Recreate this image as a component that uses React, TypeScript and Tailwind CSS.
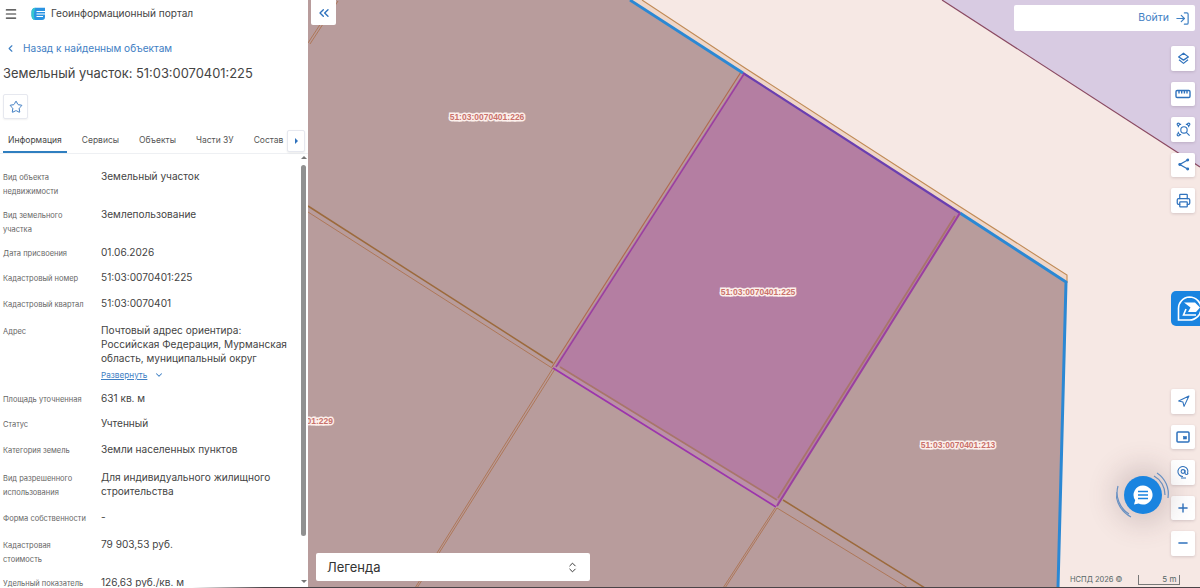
import { ChevronDown, ChevronLeft, ChevronsLeft, ChevronsUpDown, LogIn, Menu, Minus, Navigation, Plus, Printer, Star } from 'lucide-react'
import type { ReactNode } from 'react'

type Row = { label: string[]; value?: string[]; h: string; more?: boolean }

const rows: Row[] = [
  { label: ['Вид объекта', 'недвижимости'], value: ['Земельный участок'], h: 'h-[38px]' },
  { label: ['Вид земельного', 'участка'], value: ['Землепользование'], h: 'h-[38px]' },
  { label: ['Дата присвоения'], value: ['01.06.2026'], h: 'h-[25px]' },
  { label: ['Кадастровый номер'], value: ['51:03:0070401:225'], h: 'h-[26px]' },
  { label: ['Кадастровый квартал'], value: ['51:03:0070401'], h: 'h-[27px]' },
  { label: ['Адрес'], value: ['Почтовый адрес ориентира:', 'Российская Федерация, Мурманская', 'область, муниципальный округ'], h: 'h-[68px]', more: true },
  { label: ['Площадь уточненная'], value: ['631 кв. м'], h: 'h-[25px]' },
  { label: ['Статус'], value: ['Учтенный'], h: 'h-[26px]' },
  { label: ['Категория земель'], value: ['Земли населенных пунктов'], h: 'h-[28px]' },
  { label: ['Вид разрешенного', 'использования'], value: ['Для индивидуального жилищного', 'строительства'], h: 'h-[40px]' },
  { label: ['Форма собственности'], value: ['-'], h: 'h-[27px]' },
  { label: ['Кадастровая', 'стоимость'], value: ['79 903,53 руб.'], h: 'h-[38px]' },
  { label: ['Удельный показатель'], value: ['126,63 руб./кв. м'], h: 'h-[38px]' },
]

function MapButton({ children }: { children: ReactNode }) {
  return (
    <button className="w-6 h-[24.5px] bg-white rounded-[2px] flex items-center justify-center text-[#2f72bd] shadow-[0_1px_3px_rgba(80,60,80,0.2)]">
      {children}
    </button>
  )
}

function LayersIcon() {
  return (
    <svg width="13" height="13" viewBox="0 0 16 16" fill="none" stroke="currentColor" strokeWidth="1.5" strokeLinejoin="round">
      <path d="M8 1.500 14 6 8 10 2 6Z" />
      <path d="M2.500 9.500 8 14l5.500-4.500" />
    </svg>
  )
}

function RulerIcon() {
  return (
    <svg width="16" height="16" viewBox="0 0 16 16" fill="none" stroke="currentColor" strokeWidth="1.4">
      <rect x="1" y="4.500" width="14" height="7" rx="1.200" />
      <path d="M4 5v2.500M6.700 5v2.500M9.400 5v2.500M12 5v2.500" />
    </svg>
  )
}

function AreaSearchIcon() {
  return (
    <svg width="15" height="15" viewBox="0 0 16 16" fill="none" stroke="currentColor" strokeWidth="1.200">
      <circle cx="2.500" cy="2.500" r="1.300" />
      <circle cx="13.500" cy="2.500" r="1.300" />
      <circle cx="2.500" cy="13.500" r="1.300" />
      <path d="M4 2.500h1.500M10.500 2.500H12M2.500 4v1.500M2.500 10.500V12M13.500 4v1.500M4 13.500h1.500" />
      <circle cx="8.500" cy="8.500" r="3.400" />
      <path d="m11 11 3.500 3.500" />
    </svg>
  )
}

function ShareIcon() {
  return (
    <svg width="13" height="13" viewBox="0 0 14 14" fill="currentColor" stroke="currentColor" strokeWidth="1.400">
      <path d="M11.500 2.200 3 7l8.500 4.800" fill="none" />
      <circle cx="11.500" cy="2.200" r="0.900" />
      <circle cx="3" cy="7" r="0.900" />
      <circle cx="11.500" cy="11.800" r="0.900" />
    </svg>
  )
}

function PipIcon() {
  return (
    <svg width="14" height="14" viewBox="0 0 14 14" fill="none" stroke="currentColor" strokeWidth="1.500">
      <rect x="1" y="2" width="12" height="10" rx="1" />
      <rect x="7.500" y="6.500" width="3" height="2.500" fill="currentColor" strokeWidth="0.600" />
    </svg>
  )
}

function PinAtIcon() {
  return (
    <svg width="14" height="14" viewBox="0 0 14 14" fill="none" stroke="currentColor" strokeWidth="1.100">
      <path d="M11.500 8.500A5 5 0 1 0 7 11.500" />
      <circle cx="7" cy="6.500" r="1.900" />
      <path d="M9 5v3a1.500 1.500 0 0 0 3 0M5 13h5" />
    </svg>
  )
}

function PortalLogo() {
  return (
    <svg width="14" height="14" viewBox="0 0 14 14">
      <path d="M4.500.8H14V10a3 3 0 0 1-3 3H4.500C2 13 .5 11 .5 8.500V5C.5 2.500 2 .8 4.500.8Z" fill="#2a93e2" />
      <path d="M4.500.8C2 .8.500 2.500.500 5v3.500C.500 11 2 13 4 13 2.800 11 2.500 5 4.500.8Z" fill="#35c6d0" />
      <path d="M5.500 4.500H14M5.500 7H14M5.500 9.500H12" stroke="#fff" strokeWidth="1" />
    </svg>
  )
}

function ServiceTabIcon() {
  return (
    <svg width="27" height="27" viewBox="0 0 27 27" fill="none">
      <path d="M13.500 2a11.500 11.500 0 1 1 0 23H2.500v-11A11.500 11.500 0 0 1 13.500 2Z" stroke="#fff" strokeWidth="1.600" />
      <path d="M8 7.500h11l5 5-4 4.500H12l2.500-4.500Z" fill="#fff" />
      <path d="M10 14 7.500 20H20" stroke="#fff" strokeWidth="1.600" />
    </svg>
  )
}

function ChatWidget() {
  return (
    <div className="absolute left-[808px] top-[470px] w-[54px] h-[50px] flex items-center justify-center">
      <svg className="absolute left-0 top-0" width="54" height="50" viewBox="0 0 54 50" fill="none" stroke="#6a9ad0" strokeWidth="1.200">
        <path d="M13 44A25 25 0 0 1 2 16" />
        <path d="M15 47A28 28 0 0 1 0 22" />
        <path d="M41 3a25 25 0 0 1 11 25" />
        <path d="M38 6a21 21 0 0 1 11 19" />
      </svg>
      <div className="relative w-[38px] h-[38px] rounded-full bg-[#1a84e0] flex items-center justify-center shadow-[0_0_28px_10px_rgba(90,60,70,0.2)]">
        <svg width="22" height="22" viewBox="0 0 22 22">
          <path d="M11 1.500a9.500 9.500 0 1 1-4.400 17.900L2 20.500l1.200-4.200A9.500 9.500 0 0 1 11 1.500Z" fill="#fff" />
          <path d="M6 7.500h10M6 11h10M6 14.500h10" stroke="#1a84e0" strokeWidth="1.700" />
        </svg>
      </div>
    </div>
  )
}

function ParcelMap() {
  const label = { fontFamily: 'Liberation Sans, sans-serif', fontSize: 8.5, fontWeight: 700, fill: '#c9706a', stroke: '#fcf0ec', strokeWidth: 2.8, paintOrder: 'stroke' as const }
  return (
    <svg className="absolute inset-0" width="892" height="587" viewBox="308 0 892 587">
      <rect x="308" y="0" width="892" height="588" fill="#f6e8e4" />
      <path d="M942 0H1200V167Z" fill="#d8cbe2" />
      <path d="M942 0 1200 167" stroke="#8a4a62" strokeWidth="1.200" fill="none" />
      <path d="M642 0 745 68 962 208 1067 275 1067 300 1058 588H1040L630 0Z" fill="#efd6c8" />
      <path d="M642 0 745 68 962 208 1067 275V283" stroke="#c08a55" strokeWidth="1.100" fill="none" />
      <path d="M308 0H630L743 72 960 213 1066 282 1058 588H308Z" fill="#b89c9c" />
      <path d="M743 73 960 213 777 505 554 367Z" fill="#b47ea2" />
      <path d="M558 366 778 500 776 507 553 368Z" fill="#bb90a8" />

      <g fill="none" stroke="#ad7350">
        <path d="M336 0 308 43M338 1 310 44" strokeWidth="0.900" />
        <path d="M308 206 553 363" strokeWidth="1.500" stroke="#9c6a3c" />
        <path d="M308 212 552 368" strokeWidth="0.900" />
        <path d="M783 500 925 588" strokeWidth="1.500" stroke="#9c6a3c" />
        <path d="M777 508 908 588" strokeWidth="0.900" />
        <path d="M553 368 415 588M555 369 417 588" strokeWidth="0.900" />
        <path d="M775 508 723 588M777 508 725 588" strokeWidth="0.900" />
        <path d="M560 367 777 500" strokeWidth="1.700" stroke="#a8756a" />
        <path d="M955 216 778 498" strokeWidth="1.800" stroke="#a8756a" />
        <path d="M741 72 552 367" strokeWidth="1.200" stroke="#b06a50" />
      </g>

      <path d="M630 0 743 73" stroke="#2b88d4" strokeWidth="2.800" fill="none" />
      <path d="M960 213 1066 282 1058 588" stroke="#2b88d4" strokeWidth="3" fill="none" />
      <path d="M743 73 960 213" stroke="#6a3fb0" strokeWidth="2.200" fill="none" />
      <path d="M744 74 556 367" stroke="#9a3fa0" strokeWidth="1.500" fill="none" />
      <path d="M960 213 777 506" stroke="#9a3fa0" strokeWidth="2" fill="none" />
      <path d="M553 368 776 507" stroke="#9c35ac" strokeWidth="1.800" fill="none" />

      <text x="487" y="120" textAnchor="middle" style={label}>51:03:0070401:226</text>
      <text x="758" y="295" textAnchor="middle" style={label}>51:03:0070401:225</text>
      <text x="958" y="448" textAnchor="middle" style={label}>51:03:0070401:213</text>
      <text x="333" y="424" textAnchor="end" style={label}>51:03:0070401:229</text>
    </svg>
  )
}

export default function App() {
  return (
    <div className="w-[1200px] h-[588px] flex flex-col overflow-hidden bg-white [font-family:Inter,sans-serif]">
      <div className="flex h-[587px]">
        <aside className="w-[308px] shrink-0 flex flex-col bg-white">
          <div className="h-[27px] flex items-center pl-[4px] shrink-0">
            <Menu size={14} strokeWidth={2} className="text-[#333]" />
            <span className="ml-[13px]"><PortalLogo /></span>
            <span className="ml-[6px] text-[10.1px] text-[#444]">Геоинформационный портал</span>
          </div>
          <div className="h-[44px] flex items-center pl-[5px] pb-[1px] shrink-0 text-[#3f80c4]">
            <ChevronLeft size={11} strokeWidth={2.5} />
            <span className="ml-[7px] text-[10.1px]">Назад к найденным объектам</span>
          </div>
          <h1 className="h-[18px] pl-[3px] text-[12.9px] leading-[18px] text-[#444] font-normal shrink-0 -mt-[6px]">Земельный участок: 51:03:0070401:225</h1>
          <button className="mt-[11px] ml-[3px] w-[25px] h-[25px] shrink-0 rounded-[2px] border border-[#e6e8ef] flex items-center justify-center text-[#2f72bd] shadow-[0_1px_2px_rgba(0,0,0,0.06)]">
            <Star size={14} strokeWidth={1.6} />
          </button>
          <div className="mt-[12px] h-[22px] flex shrink-0 border-b border-[#eef0f3] box-content">
            <div className="flex gap-5 pl-[8px] flex-1 overflow-hidden text-[8.5px] text-[#555] min-w-0 whitespace-nowrap">
              <span className="shrink-0 -ml-[5px] px-[5px] pt-[3px] border-b-2 border-[#2f7fc0] text-[#444] -mr-[5px]">Информация</span>
              <span className="shrink-0 pt-[3px]">Сервисы</span>
              <span className="shrink-0 pt-[3px]">Объекты</span>
              <span className="shrink-0 pt-[3px]">Части ЗУ</span>
              <span className="shrink-0 pt-[3px]">Состав</span>
            </div>
            <button className="ml-[3px] mr-[3px] -mt-[1px] w-[18px] h-[22px] shrink-0 rounded-[2px] border border-[#e6e8ef] bg-white flex items-center justify-center shadow-[0_1px_2px_rgba(0,0,0,0.08)]">
              <span className="w-0 h-0 border-y-[3px] border-y-transparent border-l-[3px] border-l-[#2f72bd]" />
            </button>
          </div>
          <div className="flex flex-1 min-h-0 overflow-hidden">
            <div className="flex-1 min-w-0 pt-[16px] pl-[3px]">
              {rows.map(row => (
                <div key={row.label[0]} className={`flex ${row.h}`}>
                  <div className="w-[98px] shrink-0 pt-[1px] text-[7.5px] leading-[14px] text-[#666]">
                    {row.label.map(line => <div key={line}>{line}</div>)}
                  </div>
                  <div className="-mt-[1px] text-[10.1px] leading-[14px] text-[#444] whitespace-nowrap">
                    {row.value?.map(line => <div key={line}>{line}</div>)}
                    {row.more && (
                      <div className="flex items-center gap-[7px] mt-[3px] text-[8.2px] text-[#3f80c4]">
                        <span className="underline">Развернуть</span>
                        <ChevronDown size={10} strokeWidth={2.5} />
                      </div>
                    )}
                  </div>
                </div>
              ))}
            </div>
            <div className="w-[7px] mr-[1px] shrink-0 flex flex-col items-center bg-white">
              <span className="mt-[2px] w-0 h-0 border-x-[3px] border-x-transparent border-b-[3px] border-b-[#777]" />
              <div className="mt-[6px] w-[5px] h-[371px] rounded-full bg-[#909090]" />
              <span className="mt-[44px] w-0 h-0 border-x-[3px] border-x-transparent border-t-[3px] border-t-[#777]" />
            </div>
          </div>
        </aside>

        <main className="relative flex-1 overflow-hidden">
          <ParcelMap />

          <button className="absolute left-[3px] top-0 w-[25px] h-[25px] bg-white rounded-b-[2px] flex items-center justify-center text-[#2f72bd]">
            <ChevronsLeft size={16} strokeWidth={2} />
          </button>

          <div className="absolute right-[5px] top-[5px] w-[181px] h-[26px] bg-white rounded-[2px] flex items-center justify-end pr-[5px] gap-[6px] text-[#3f80c4]">
            <span className="text-[10.5px]">Войти</span>
            <LogIn size={15} strokeWidth={1.9} />
          </div>

          <div className="absolute right-[5px] top-[46px] flex flex-col gap-[11px]">
            <MapButton><LayersIcon /></MapButton>
            <MapButton><RulerIcon /></MapButton>
            <MapButton><AreaSearchIcon /></MapButton>
            <MapButton><ShareIcon /></MapButton>
            <MapButton><Printer size={15} strokeWidth={2} /></MapButton>
          </div>

          <div className="absolute right-0 top-[291px] w-[29px] h-[35px] bg-[#1a84e0] rounded-l-[5px] flex items-center pl-[5px] overflow-hidden">
            <span className="shrink-0"><ServiceTabIcon /></span>
          </div>

          <div className="absolute right-[5px] top-[389px] flex flex-col gap-[11px]">
            <MapButton><Navigation size={13} strokeWidth={2} /></MapButton>
            <MapButton><PipIcon /></MapButton>
            <MapButton><PinAtIcon /></MapButton>
            <MapButton><Plus size={14} strokeWidth={2.4} /></MapButton>
            <MapButton><Minus size={14} strokeWidth={2.4} /></MapButton>
          </div>

          <ChatWidget />

          <div className="absolute left-[8px] bottom-[6px] w-[274px] h-[28px] bg-white rounded-[2px] flex items-center justify-between pl-[11px] pr-[11px] pt-[1px] text-[#333]">
            <span className="text-[13px]">Легенда</span>
            <ChevronsUpDown size={13} strokeWidth={1.8} />
          </div>

          <div className="absolute right-0 bottom-0 left-[758px] h-[14px] flex items-center bg-[#f6e8e4]/60 pl-[4px] text-[7.5px] text-[#566]">
            <span>НСПД 2026 ©</span>
            <div className="ml-[16px] w-[42px] h-[10px] border-b border-l border-r border-[#777] flex justify-end pr-[3px] leading-[8px] text-[8px]">5 m</div>
          </div>
        </main>
      </div>
      <div className="h-px shrink-0 bg-gradient-to-r from-white from-[16%] to-[#4a4347] to-[22%]" />
    </div>
  )
}
